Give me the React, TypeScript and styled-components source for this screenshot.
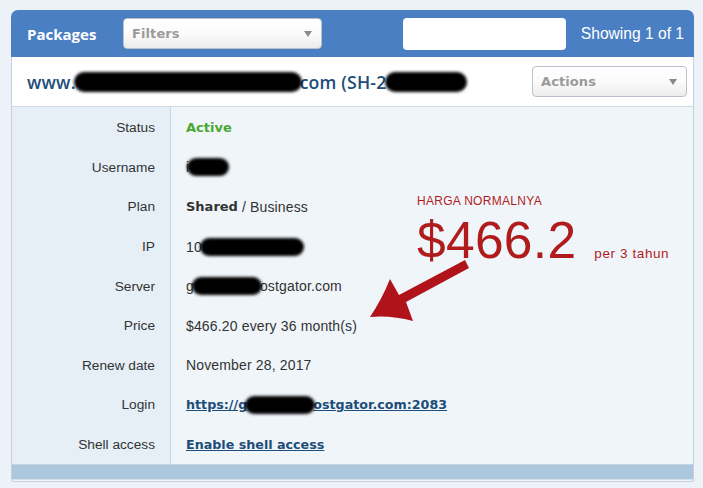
import * as React from 'react'
import styled, { createGlobalStyle } from 'styled-components'

const Global = createGlobalStyle`
  html, body {
    margin: 0;
    padding: 0;
    background: #edf2f8;
  }
  body {
    font-family: "Liberation Sans", Arial, sans-serif;
  }
`

const Page = styled.div`
  width: 703px;
  height: 488px;
  padding: 10px 9px 0 11px;
  box-sizing: border-box;
  overflow: hidden;
`

const Panel = styled.div`
  width: 683px;
  border: 1px solid #c3d1e0;
  border-top: none;
  border-radius: 7px 7px 3px 3px;
  background: #f0f5fa;
  box-sizing: border-box;
`

const Header = styled.div`
  height: 47px;
  background: #4a7fc3;
  border-radius: 7px 7px 0 0;
  margin: 0 -1px;
  display: flex;
  align-items: center;
  padding: 0 10px 0 16px;
  box-sizing: border-box;
`

const HeaderTitle = styled.div`
  color: #fff;
  font-family: "Open Sans", sans-serif;
  font-weight: 700;
  font-size: 15px;
  width: 96px;
`

const Select = styled.div<{ $w: number }>`
  width: ${({ $w }) => $w}px;
  height: 31px;
  box-sizing: border-box;
  border: 1px solid #b9c2cc;
  border-radius: 4px;
  background: linear-gradient(#ffffff 0%, #fbfbfb 50%, #ececec 100%);
  display: flex;
  align-items: center;
  justify-content: space-between;
  padding: 0 9px 0 8px;
  color: #9a9a9a;
  font-weight: 700;
  font-size: 13px;
  font-family: "DejaVu Sans", sans-serif;
  letter-spacing: 0.1px;

  &::after {
    content: '';
    border-left: 4px solid transparent;
    border-right: 4px solid transparent;
    border-top: 6px solid #8a8a8a;
  }
`

const Search = styled.div`
  width: 163px;
  height: 32px;
  margin-left: auto;
  background: #fff;
  border-radius: 4px;
`

const Showing = styled.div`
  color: #fff;
  font-size: 15.6px;
  margin-left: 15px;
`

const TitleRow = styled.div`
  height: 50px;
  background: #fff;
  border-bottom: 1px solid #cfdbe6;
  display: flex;
  align-items: center;
  padding: 0 6px 0 15px;
  box-sizing: border-box;
`

const Domain = styled.div`
  font-family: "Open Sans", sans-serif;
  font-size: 17.6px;
  font-weight: 600;
  color: #1d4d78;
  display: flex;
  align-items: center;
  letter-spacing: 0.2px;
`

const Blot = styled.span<{ $w: number; $h?: number }>`
  display: inline-block;
  width: ${({ $w }) => $w}px;
  height: ${({ $h }) => $h ?? 18}px;
  background: #000;
  border-radius: 999px;
  filter: blur(1.6px);
  vertical-align: middle;
  margin: 0 -2px;
`

const Body = styled.div`
  position: relative;
  display: grid;
  grid-template-columns: 159px 1fr;
`

const LabelCol = styled.div`
  background: #e6eff6;
  border-right: 1px solid #c9d7e3;
  padding: 1px 0 0;
`

const ValueCol = styled.div`
  padding: 1px 0 0;
`

const Cell = styled.div`
  height: 39.6px;
  display: flex;
  align-items: center;
  color: #333;
`

const LabelCell = styled(Cell)`
  justify-content: flex-end;
  padding-right: 15px;
  font-size: 13.7px;
`

const ValueCell = styled(Cell)`
  padding-left: 15px;
  white-space: nowrap;
  font-size: 14px;
  letter-spacing: 0.15px;
`

const Active = styled.span`
  color: #4aa832;
  font-weight: 700;
  font-family: "DejaVu Sans", sans-serif;
  font-size: 13px;
  letter-spacing: 0;
`

const Strong = styled.b`
  font-family: "DejaVu Sans", sans-serif;
  font-size: 13px;
  letter-spacing: 0;
  margin-right: 4px;
`

const Link = styled.a`
  color: #1d4d78;
  font-weight: 700;
  font-family: "DejaVu Sans", sans-serif;
  font-size: 12.7px;
  letter-spacing: 0;
  text-decoration: underline;
  display: inline-flex;
  align-items: center;
`

const Note = styled.div`
  position: absolute;
  left: 405px;
  top: 87px;
  color: #b01c1c;
`

const NoteTitle = styled.div`
  font-size: 12px;
  letter-spacing: 0.3px;
`

const NotePrice = styled.div`
  display: flex;
  align-items: baseline;
  margin-top: 2px;
`

const Big = styled.span`
  font-size: 51.5px;
  letter-spacing: 0.3px;
`

const Per = styled.span`
  font-size: 13.5px;
  margin-left: 18px;
  letter-spacing: 0.6px;
`

const Arrow = styled.svg`
  position: absolute;
  left: 348px;
  top: 150px;
`

const Footer = styled.div`
  height: 14px;
  background: #adc8de;
  border-top: 1px solid #c4d4e2;
  border-bottom: 1px solid #d4e0ea;
  margin: 0 0 1px 0;
`

const labels = ['Status', 'Username', 'Plan', 'IP', 'Server', 'Price', 'Renew date', 'Login', 'Shell access']

export default function App() {
  return (
    <Page>
      <Global />
      <Panel>
        <Header>
          <HeaderTitle>Packages</HeaderTitle>
          <Select $w={199}>Filters</Select>
          <Search />
          <Showing>Showing 1 of 1</Showing>
        </Header>
        <TitleRow>
          <Domain>
            www.<Blot $w={228} $h={20} />com (SH-2<Blot $w={82} $h={20} />
          </Domain>
          <Select $w={155} style={{ marginLeft: 'auto' }}>Actions</Select>
        </TitleRow>
        <Body>
          <LabelCol>
            {labels.map(l => (
              <LabelCell key={l}>{l}</LabelCell>
            ))}
          </LabelCol>
          <ValueCol>
            <ValueCell>
              <Active>Active</Active>
            </ValueCell>
            <ValueCell>
              i<Blot $w={42} />
            </ValueCell>
            <ValueCell>
              <Strong>Shared</Strong>/ Business
            </ValueCell>
            <ValueCell>
              10<Blot $w={104} />
            </ValueCell>
            <ValueCell>
              g<Blot $w={70} />ostgator.com
            </ValueCell>
            <ValueCell>$466.20 every 36 month(s)</ValueCell>
            <ValueCell>November 28, 2017</ValueCell>
            <ValueCell>
              <Link>
                https://g<Blot $w={70} />ostgator.com:2083
              </Link>
            </ValueCell>
            <ValueCell>
              <Link>Enable shell access</Link>
            </ValueCell>
          </ValueCol>
          <Note>
            <NoteTitle>HARGA NORMALNYA</NoteTitle>
            <NotePrice>
              <Big>$466.2</Big>
              <Per>per 3 tahun</Per>
            </NotePrice>
          </Note>
          <Arrow width="120" height="75" viewBox="0 0 120 75">
            <path
              d="M105 3 L109 11 L46 45 L53 64 Q31 58 10 60 Q22 42 30 22 L39 38 Z"
              fill="#b0141a"
            />
          </Arrow>
        </Body>
        <Footer />
      </Panel>
    </Page>
  )
}
